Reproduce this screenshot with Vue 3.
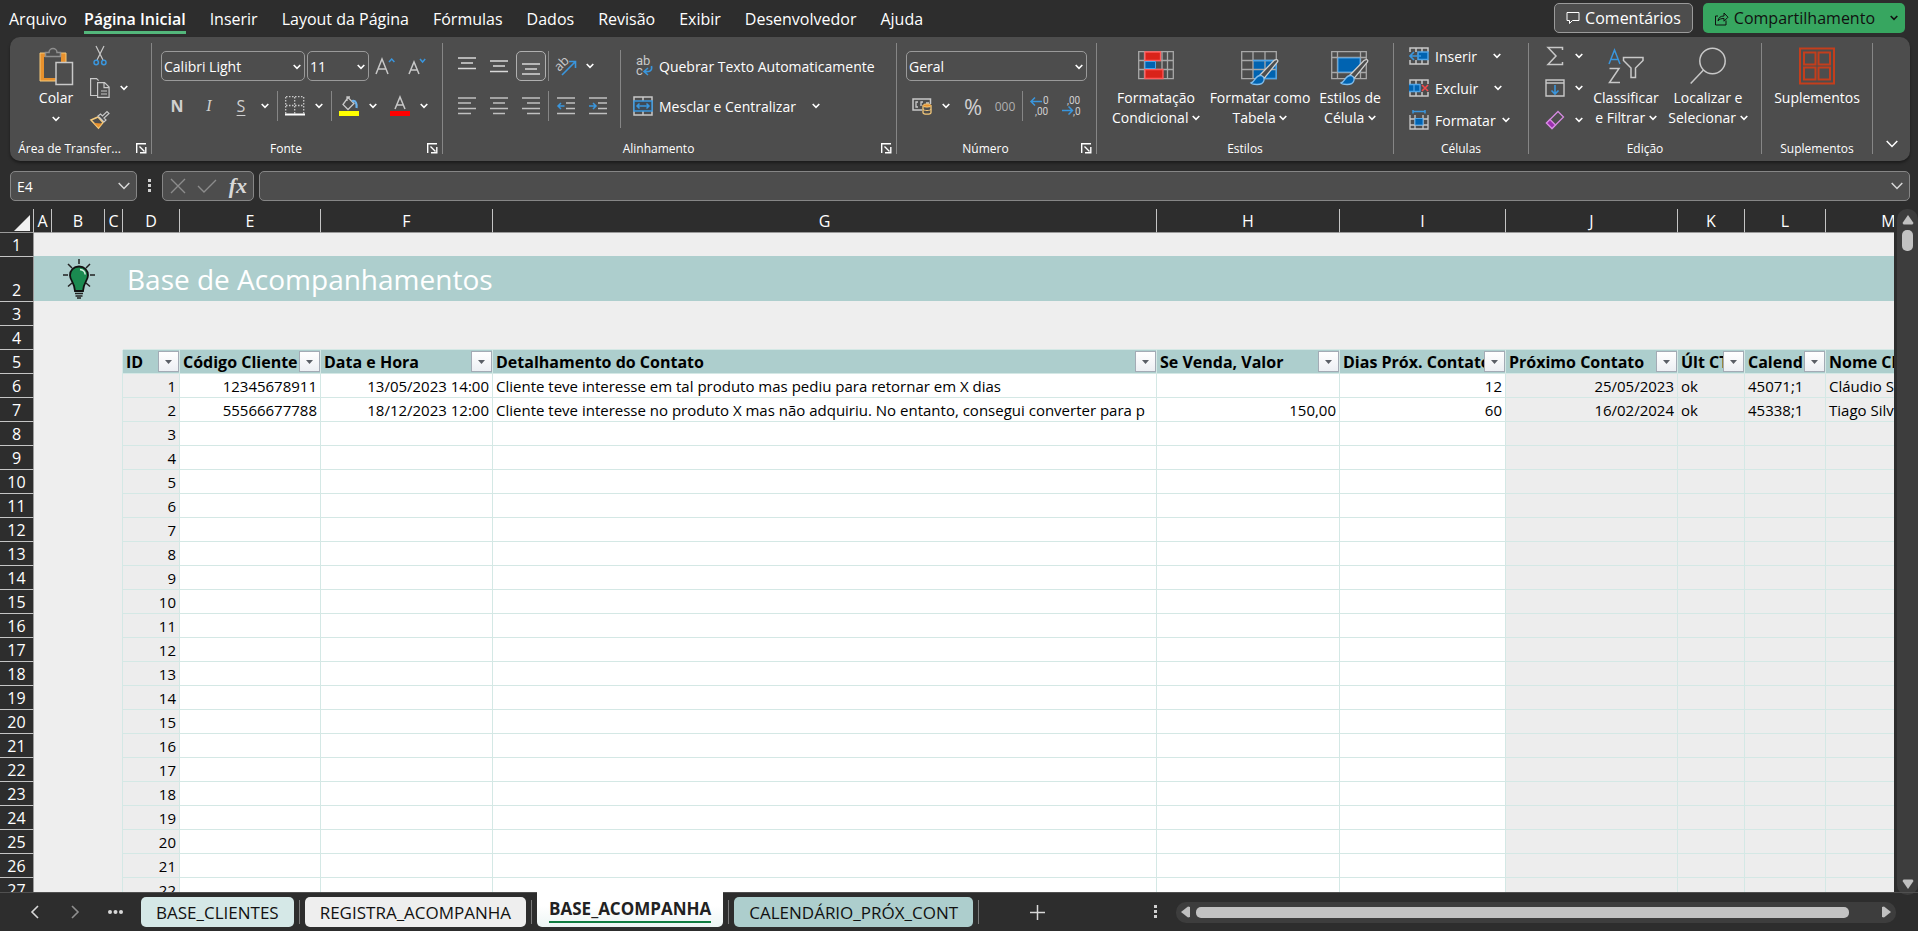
<template>
  <div class="app">
    <header class="topbar">
      <nav class="menu">
        <a href="#" class="menu-tab">Arquivo</a>
        <div class="menu-list">
          <a v-for="m in menus" :key="m" href="#" class="menu-tab" :class="{ active: m === 'Página Inicial' }">{{ m }}</a>
        </div>
      </nav>
      <div class="top-actions">
        <button class="btn-comments">
          <svg width="14" height="14" viewBox="0 0 14 14"><path d="M1 1.500h12v8H6.500L3.500 12.500V9.500H1z" fill="none" stroke="#fff" /></svg>
          Comentários
        </button>
        <button class="btn-share">
          <svg width="15" height="15" viewBox="0 0 15 15"><path d="M4 5H1.500v9H12V9.500M4 10c.5-3.500 2.500-5 6-5V2l4 4.200-4 4V7.500C7 7.500 5.500 8 4 10z" fill="none" stroke="#111" /></svg>
          Compartilhamento
          <Chevron />
        </button>
      </div>
    </header>

    <div class="ribbon">
      <section class="group g-clip">
        <div class="body">
          <button class="big paste">
            <svg width="36" height="38" viewBox="0 0 36 38">
              <path d="M2 6h26v28H2z" fill="#e8912d" stroke="#f5c97a" />
              <path d="M6 10h17v21H6z" fill="#4d4d4d" />
              <path d="M7.500 9.500V5.500h3.500a4 4 0 0 1 8 0h3.500v4z" fill="#4d4d4d" stroke="#8f8f8f" stroke-width="1.500" />
              <path d="M18 15.500h16.500v22H18z" fill="#4d4d4d" stroke="#c8c8c8" stroke-width="1.500" />
            </svg>
            <span>Colar</span>
            <Chevron />
          </button>
          <div class="stack">
            <div class="line">
              <button class="ico" aria-label="Recortar">
                <svg width="14" height="20" viewBox="0 0 14 20">
                  <path d="M3 0l7 14M11 0L4 14" stroke="#c8c8c8" stroke-width="1.200" fill="none" />
                  <circle cx="3.200" cy="16.500" r="2.200" fill="none" stroke="#3a96dd" stroke-width="1.500" />
                  <circle cx="10.800" cy="16.500" r="2.200" fill="none" stroke="#3a96dd" stroke-width="1.500" />
                </svg>
              </button>
            </div>
            <div class="line">
              <button class="ico" aria-label="Copiar">
                <svg width="20" height="20" viewBox="0 0 20 20" fill="none" stroke="#c8c8c8" stroke-width="1.200">
                  <path d="M7 17.500H.6V.6h6l2 2M7.600 4.600h7l4.500 4.500v10.300H7.600zM14 4.600v5h5M11 13h6M11 16h6" />
                </svg>
              </button>
              <button class="arrow" aria-label="Opções de cópia"><Chevron /></button>
            </div>
            <div class="line">
              <button class="ico" aria-label="Pincel de Formatação">
                <svg width="20" height="18" viewBox="0 0 20 18">
                  <path d="M1 9l7-3 5 5.500L8.500 17z" fill="#4d4d4d" stroke="#f5c97a" stroke-width="1.500" />
                  <path d="M4 12l8 .5L8.500 16.500z" fill="#e8912d" />
                  <path d="M8 5l6 6 2-2-2-2 5-4.500-2-2L12.500 5l-2-2z" fill="#4d4d4d" stroke="#c8c8c8" stroke-width="1.200" />
                </svg>
              </button>
            </div>
          </div>
        </div>
        <footer><span>Área de Transfer...</span><Launcher /></footer>
      </section>

      <section class="group g-font">
        <div class="body rows">
          <div class="row">
            <label class="combo font-name"><select aria-label="Fonte"><option>Calibri Light</option></select><Chevron /></label>
            <label class="combo font-size"><select aria-label="Tamanho"><option>11</option></select><Chevron /></label>
            <button class="ico" aria-label="Aumentar fonte">
              <svg width="20" height="18" viewBox="0 0 20 18" fill="none"><path d="M1 17L7 2l6 15M3 12h8" stroke="#c8c8c8" stroke-width="1.500" /><path d="M14 5l2.700-3 2.700 3" stroke="#3a96dd" stroke-width="1.500" /></svg>
            </button>
            <button class="ico" aria-label="Diminuir fonte">
              <svg width="18" height="18" viewBox="0 0 18 18" fill="none"><path d="M1 17L6 5l5 12M3 13h6" stroke="#c8c8c8" stroke-width="1.500" /><path d="M12 2l2.600 3 2.600-3" stroke="#3a96dd" stroke-width="1.500" /></svg>
            </button>
          </div>
          <div class="row">
            <button class="ico glyph bold">N</button>
            <button class="ico glyph italic">I</button>
            <button class="ico glyph under">S</button>
            <button class="arrow" aria-label="Sublinhado"><Chevron /></button>
            <i class="vsep wide"></i>
            <button class="ico" aria-label="Bordas">
              <svg width="20" height="20" viewBox="0 0 20 20" fill="none" stroke="#c8c8c8">
                <path d="M1 .7h18M1 9.500h18M.7 1v17M9.700 1v17M18.700 1v17" stroke-dasharray="1.500 1.500" stroke-width="1.300" />
                <path d="M0 18.500h20" stroke="#fff" stroke-width="2" />
              </svg>
            </button>
            <button class="arrow" aria-label="Opções de borda"><Chevron /></button>
            <i class="vsep wide"></i>
            <button class="ico" aria-label="Cor de preenchimento">
              <svg width="20" height="20" viewBox="0 0 20 20" fill="none">
                <path d="M9 1.500l6 6-6 6-5-5zM8 5V1h3" stroke="#c8c8c8" stroke-width="1.300" />
                <path d="M13 5c4-1 5 3 4.500 7" stroke="#6cb2ec" stroke-width="2.200" />
                <path d="M0 15h20v5H0z" fill="#ff0" />
              </svg>
            </button>
            <button class="arrow" aria-label="Cores de preenchimento"><Chevron /></button>
            <i class="gap"></i>
            <button class="ico" aria-label="Cor da fonte">
              <svg width="20" height="20" viewBox="0 0 20 20" fill="none"><path d="M5 13L10 1l5 12M6.500 9h7" stroke="#c8c8c8" stroke-width="1.500" /><path d="M0 15h20v5H0z" fill="#f00" /></svg>
            </button>
            <button class="arrow" aria-label="Cores da fonte"><Chevron /></button>
          </div>
        </div>
        <footer><span>Fonte</span><Launcher /></footer>
      </section>

      <section class="group g-align">
        <div class="body">
          <div class="rows">
            <div class="row">
              <button v-for="(d, i) in vAligns" :key="d" class="ico" :class="{ on: i === 2 }" aria-label="Alinhamento vertical">
                <svg width="18" height="18" viewBox="0 0 18 18"><path :d="d" stroke="#d8d8d8" stroke-width="1.500" /></svg>
              </button>
              <i class="vsep"></i>
              <button class="ico" aria-label="Orientação">
                <svg width="20" height="20" viewBox="0 0 20 20">
                  <text x="-1" y="12" font-size="13" fill="#c8c8c8" transform="rotate(-45 6 9)">ab</text>
                  <path d="M6 19L19 6M13 5.500h6.500V12" fill="none" stroke="#3a96dd" stroke-width="1.600" />
                </svg>
              </button>
              <button class="arrow" aria-label="Opções de orientação"><Chevron /></button>
            </div>
            <div class="row">
              <button v-for="d in hAligns" :key="d" class="ico" aria-label="Alinhamento horizontal">
                <svg width="18" height="18" viewBox="0 0 18 18"><path :d="d" stroke="#c0c0c0" stroke-width="1.500" /></svg>
              </button>
              <i class="vsep"></i>
              <button v-for="d in indents" :key="d" class="ico" aria-label="Recuo">
                <svg width="18" height="18" viewBox="0 0 18 18" fill="none">
                  <path d="M0 1h18M9 6h9M9 11.500h9M0 16.500h18" stroke="#c0c0c0" stroke-width="1.500" />
                  <path :d="d" stroke="#3a96dd" stroke-width="1.500" />
                </svg>
              </button>
            </div>
          </div>
          <i class="tall-sep"></i>
          <div class="rows">
            <button class="row text-btn">
              <svg class="small-text" width="20" height="20" viewBox="0 0 20 20">
                <text x="3" y="9" font-size="13" fill="#c8c8c8">ab</text>
                <text x="3" y="19" font-size="13" fill="#c8c8c8">c</text>
                <path d="M18.500 10c1 5-2 6-7 5.500M15 12l-4 3.500 4 3.500" fill="none" stroke="#3a96dd" stroke-width="1.600" />
              </svg>
              <span>Quebrar Texto Automaticamente</span>
            </button>
            <button class="row text-btn">
              <svg width="20" height="20" viewBox="0 0 20 20" fill="none">
                <path d="M1 1h18v18H1zM10 1v4M10 15v4" stroke="#c8c8c8" stroke-width="1.500" />
                <path d="M1 5h18v10H1z" fill="#3f4a55" stroke="#3a96dd" stroke-width="1.500" />
                <path d="M4 10h12M6.500 7.500L4 10l2.500 2.500M13.500 7.500L16 10l-2.500 2.500" stroke="#3a96dd" stroke-width="1.500" />
              </svg>
              <span>Mesclar e Centralizar</span>
              <Chevron class="far" />
            </button>
          </div>
        </div>
        <footer><span>Alinhamento</span><Launcher /></footer>
      </section>

      <section class="group g-number">
        <div class="body rows">
          <div class="row">
            <label class="combo num-format"><select aria-label="Formato de número"><option>Geral</option></select><Chevron /></label>
          </div>
          <div class="row">
            <button class="ico" aria-label="Formato contábil">
              <svg width="20" height="18" viewBox="0 0 20 18" fill="none">
                <path d="M18.500 7V2H1v11h9" stroke="#c8c8c8" stroke-width="1.500" />
                <path d="M6 5H4v5h2M11 5H9v4M14 6h3" stroke="#c8c8c8" stroke-width="1.300" />
                <path d="M11 8.500v7c0 2.200 8 2.200 8 0v-7" fill="#4d4d4d" stroke="#f5c97a" stroke-width="1.300" />
                <ellipse cx="15" cy="8.500" rx="4" ry="1.600" fill="#e8912d" stroke="#f5c97a" />
                <path d="M11 12c0 2 8 2 8 0" stroke="#f5c97a" />
              </svg>
            </button>
            <button class="arrow" aria-label="Moedas"><Chevron /></button>
            <i class="gap"></i>
            <button class="ico glyph percent">%</button>
            <button class="ico glyph thousands">000</button>
            <i class="vsep"></i>
            <button class="ico" aria-label="Aumentar casas decimais">
              <svg class="small-text" width="20" height="20" viewBox="0 0 20 20">
                <text x="13" y="8" font-size="10" fill="#d0d0d0">0</text>
                <text x="5" y="19" font-size="10" fill="#d0d0d0">,00</text>
                <path d="M12 5.500H1M5 1.500l-4 4 4 4" fill="none" stroke="#3a96dd" stroke-width="1.500" />
              </svg>
            </button>
            <button class="ico" aria-label="Diminuir casas decimais">
              <svg class="small-text" width="20" height="20" viewBox="0 0 20 20">
                <text x="5" y="8" font-size="10" fill="#d0d0d0">,00</text>
                <text x="11" y="19" font-size="10" fill="#d0d0d0">,0</text>
                <path d="M0 14.500h10M6.500 10.500l4 4-4 4" fill="none" stroke="#3a96dd" stroke-width="1.500" />
              </svg>
            </button>
          </div>
        </div>
        <footer><span>Número</span><Launcher /></footer>
      </section>

      <section class="group g-styles">
        <div class="body">
          <button class="big w100">
            <svg width="36" height="38" viewBox="0 0 36 38" fill="none">
              <path d="M.7 4.700h34.600v27H.7zM.7 13.500h34.600M.7 22.500h34.600M6.500 4.700v27M24 4.700v27M29.500 4.700v27" stroke="#a8a8a8" stroke-width="1.300" />
              <path d="M7 5h15.500v8.500H7zM7 22.500h18v9H7z" fill="#d9231a" stroke="#ff5a5a" stroke-width="1.300" />
              <path d="M7 14.500h10.500v7H7z" fill="#0063b1" stroke="#4ea3e6" />
            </svg>
            <span>Formatação<br />Condicional <Chevron /></span>
          </button>
          <button class="big w108">
            <svg width="38" height="38" viewBox="0 0 38 38" fill="none">
              <path d="M12 13h23v18H12z" fill="#0063b1" />
              <path d="M.7 4.700h34.600v27H.7zM.7 13.500h34.600M.7 22.500h34.600M12 4.700v27M24 4.700v27" stroke="#a8a8a8" stroke-width="1.300" />
              <path d="M12 13.500h23.300M35.300 13v18.500H24" stroke="#4ea3e6" stroke-width="1.300" />
              <path d="M19 28L33 13.500c3-2 4.500-.5 3.500 1.500L23.500 31z" fill="#4d4d4d" stroke="#d0d0d0" stroke-width="1.300" />
              <path d="M10 36c4-1 4-8 10-7.500 5 2 4 9-4 9-3 0-5-.5-6-1.500z" fill="#0063b1" stroke="#83beec" stroke-width="1.300" />
            </svg>
            <span>Formatar como<br />Tabela <Chevron /></span>
          </button>
          <button class="big w72">
            <svg width="38" height="38" viewBox="0 0 38 38" fill="none">
              <path d="M.7 4.700h34.600v27H.7zM.7 10.500h34.600M.7 25.500h34.600M6.500 4.700v27M29.500 4.700v27" stroke="#a8a8a8" stroke-width="1.300" />
              <path d="M7 11h22v14H7z" fill="#0063b1" stroke="#4ea3e6" />
              <path d="M19 28L33 13.500c3-2 4.500-.5 3.500 1.500L23.500 31z" fill="#4d4d4d" stroke="#d0d0d0" stroke-width="1.300" />
              <path d="M10 36c4-1 4-8 10-7.500 5 2 4 9-4 9-3 0-5-.5-6-1.500z" fill="#0063b1" stroke="#83beec" stroke-width="1.300" />
            </svg>
            <span>Estilos de<br />Célula <Chevron /></span>
          </button>
        </div>
        <footer><span>Estilos</span></footer>
      </section>

      <section class="group g-cells">
        <div class="body">
          <div class="stack">
            <button class="line text-btn">
              <svg width="20" height="18" viewBox="0 0 20 18" fill="none">
                <path d="M1 5V1h18v4M7 1v4M13 1v4M1 13v4h18v-4M7 13v4M13 13v4" stroke="#c8c8c8" stroke-width="1.500" />
                <path d="M9 5h10v7.500H9z" fill="#0063b1" stroke="#4ea3e6" stroke-width="1.500" />
                <path d="M12 9H1M5 5L1 9l4 4" stroke="#3a96dd" stroke-width="1.700" />
              </svg>
              <span>Inserir</span><Chevron class="far" />
            </button>
            <button class="line text-btn">
              <svg width="20" height="18" viewBox="0 0 20 18" fill="none">
                <path d="M1 5V1h18v4M7 1v4M13 1v4M1 13v4h18v-4M7 13v4M13 13v4" stroke="#c8c8c8" stroke-width="1.500" />
                <path d="M0 5.500h5v7H0M5 5.500h6v7H5z" fill="#0063b1" stroke="#4ea3e6" stroke-width="1.300" />
                <path d="M13 6l6 6M19 6l-6 6" stroke="#f0494b" stroke-width="1.600" />
              </svg>
              <span>Excluir</span><Chevron class="far" />
            </button>
            <button class="line text-btn">
              <svg width="20" height="20" viewBox="0 0 20 20" fill="none">
                <path d="M1 5v14h18V5M1 9h18M1 15h18M6 5v14M14 5v14" stroke="#c8c8c8" stroke-width="1.300" />
                <path d="M6 8.500h8v6.500H6z" fill="#0063b1" stroke="#4ea3e6" />
                <path d="M4 1.500h12M4 0v3.500M16 0v3.500" stroke="#3a96dd" stroke-width="1.500" />
              </svg>
              <span>Formatar</span><Chevron />
            </button>
          </div>
        </div>
        <footer><span>Células</span></footer>
      </section>

      <section class="group g-edit">
        <div class="body">
          <div class="stack">
            <div class="line">
              <button class="ico" aria-label="Soma">
                <svg width="18" height="20" viewBox="0 0 18 20" fill="none"><path d="M16.500 4V1.500H2L10 10l-8 8.500h14.500V16" stroke="#c8c8c8" stroke-width="1.500" /></svg>
              </button>
              <button class="arrow" aria-label="Funções"><Chevron /></button>
            </div>
            <div class="line">
              <button class="ico" aria-label="Preencher">
                <svg width="20" height="18" viewBox="0 0 20 18" fill="none"><path d="M1 1h18v16H1zM1 4h18" stroke="#c8c8c8" stroke-width="1.400" /><path d="M10 6v9M6.500 11.500L10 15l3.500-3.500" stroke="#3a96dd" stroke-width="1.600" /></svg>
              </button>
              <button class="arrow" aria-label="Direções"><Chevron /></button>
            </div>
            <div class="line">
              <button class="ico" aria-label="Limpar">
                <svg width="20" height="20" viewBox="0 0 20 20" fill="none" stroke="#d58ae0" stroke-width="1.300"><path d="M13 1.500l5.500 5.500L7 18.500 1.500 13z" /><path d="M5 9.500l5.500 5.500L7 18.500 1.500 13z" fill="#9b2fae" /></svg>
              </button>
              <button class="arrow" aria-label="Opções de limpeza"><Chevron /></button>
            </div>
          </div>
          <button class="big w80">
            <svg width="36" height="38" viewBox="0 0 36 38" fill="none" stroke-width="1.500">
              <path d="M1 17L6.500 3 12 17M3 12.500h7" stroke="#3a96dd" />
              <path d="M1.500 21.500h9.500L1.500 35.500H12" stroke="#c8c8c8" />
              <path d="M15.500 10.500h19.500v3l-7.500 7.500v9.500H23V21l-7.500-7.500z" stroke="#c8c8c8" />
            </svg>
            <span>Classificar<br />e Filtrar <Chevron /></span>
          </button>
          <button class="big w84">
            <svg width="36" height="38" viewBox="0 0 36 38" fill="none" stroke="#c8c8c8" stroke-width="1.500"><circle cx="22.500" cy="14" r="12.700" /><path d="M13.500 23L.7 36.500" /></svg>
            <span>Localizar e<br />Selecionar <Chevron /></span>
          </button>
        </div>
        <footer><span>Edição</span></footer>
      </section>

      <section class="group g-addins">
        <div class="body">
          <button class="big fill">
            <svg width="36" height="38" viewBox="0 0 36 38" fill="none" stroke="#c43e1c" stroke-width="2"><path d="M1 1.500h34v35H1zM5 5.500h11.500v12H5zM19.500 5.500H31v12H19.500zM5 20.500h11.500v12H5zM19.500 20.500H31v12H19.500z" /></svg>
            <span>Suplementos</span>
          </button>
        </div>
        <footer><span>Suplementos</span></footer>
      </section>

      <button class="collapse" aria-label="Recolher faixa"><BigChevron /></button>
    </div>

    <div class="formula-row">
      <div class="field name-box">
        <input v-model="cellRef" aria-label="Caixa de nome" />
        <button aria-label="Nomes"><BigChevron /></button>
      </div>
      <svg class="grip" width="3" height="14" viewBox="0 0 3 14"><path d="M0 0h3v3H0zM0 5h3v3H0zM0 10h3v3H0z" fill="#d0d0d0" /></svg>
      <div class="field fx-box">
        <button aria-label="Cancelar"><svg width="16" height="16" viewBox="0 0 16 16"><path d="M1 1l14 14M15 1L1 15" stroke="#8c8c8c" stroke-width="1.400" /></svg></button>
        <button aria-label="Inserir valor"><svg width="20" height="14" viewBox="0 0 20 14"><path d="M1 7l6 6L19 1" fill="none" stroke="#8c8c8c" stroke-width="1.400" /></svg></button>
        <button class="fx">fx</button>
      </div>
      <div class="field formula">
        <input aria-label="Barra de fórmulas" />
        <button aria-label="Expandir barra"><BigChevron /></button>
      </div>
    </div>

    <main class="sheet">
      <div class="grid">
        <table>
          <colgroup>
            <col class="col-head" />
            <col v-for="c in columns" :key="c.id" :style="{ width: c.w + 'px' }" />
          </colgroup>
          <thead>
            <tr>
              <th class="corner"><svg width="16" height="16" viewBox="0 0 16 16"><path d="M16 0v16H0z" fill="#f0f0f0" /></svg></th>
              <th v-for="c in columns" :key="c.id" class="col-letter">{{ c.id }}</th>
            </tr>
          </thead>
          <tbody>
            <tr><th class="row-num">1</th><td colspan="13" class="blank above-band"></td></tr>
            <tr class="band">
              <th class="row-num">2</th>
              <td></td>
              <td class="bulb">
                <svg width="32" height="40" viewBox="0 0 32 40">
                  <path d="M16 0v5M5 5l4 4M27 5l-4 4M0 16h5M27 16h5M5 27.500l4-3.500M27 27.500L23 24" stroke="#222" stroke-width="1.500" />
                  <path d="M16 7.500c-5.500 0-9 4-9 8.700 0 5.300 4.500 7 5 15.800h8c.5-8.800 5-10.500 5-15.800 0-4.700-3.500-8.700-9-8.700z" fill="#1a8a50" stroke="#111" stroke-width="1.800" />
                  <path d="M17 10.500c3 .3 5 2.500 5.200 5" fill="none" stroke="#d5efe0" stroke-width="1.500" />
                  <path d="M12 34.500h8M12.500 37h7M14 39h4" stroke="#222" stroke-width="1.600" />
                </svg>
              </td>
              <td></td>
              <td colspan="10" class="title">Base de Acompanhamentos</td>
            </tr>
            <tr><th class="row-num">3</th><td colspan="13" class="blank"></td></tr>
            <tr><th class="row-num">4</th><td colspan="3" class="blank"></td><td colspan="10" class="blank above"></td></tr>
            <tr>
              <th class="row-num">5</th>
              <td colspan="3" class="blank edge"></td>
              <th v-for="c in dataCols" :key="c.id" class="field-head">
                <div>
                  <span>{{ c.title }}</span>
                  <button aria-label="Filtrar"><svg width="7" height="4" viewBox="0 0 7 4"><path d="M0 0h7L3.500 4z" fill="#5a5f66" /></svg></button>
                </div>
              </th>
            </tr>
            <tr v-for="n in 22" :key="n">
              <th class="row-num">{{ n + 5 }}</th>
              <td colspan="3" class="blank edge"></td>
              <td v-for="(c, i) in dataCols" :key="c.id" class="cell" :class="{ num: c.num, gray: c.gray }">{{ i === 0 ? n : (records[n - 1] || [])[i - 1] }}</td>
            </tr>
          </tbody>
        </table>
      </div>
      <div class="vscroll">
        <svg width="12" height="10" viewBox="0 0 12 10"><path d="M6 0l5.500 8-1 1.500h-9L.5 8z" fill="#c0c0c0" /></svg>
        <i class="thumb"></i>
        <svg class="down" width="12" height="10" viewBox="0 0 12 10"><path d="M6 10l5.500-8-1-1.500h-9L.5 2z" fill="#c0c0c0" /></svg>
      </div>
    </main>

    <footer class="tabbar">
      <div class="nav-btns">
        <button aria-label="Anterior"><svg width="8" height="14" viewBox="0 0 8 14"><path d="M7 1L1 7l6 6" fill="none" stroke="#d8d8d8" stroke-width="1.600" /></svg></button>
        <button aria-label="Próxima"><svg width="8" height="14" viewBox="0 0 8 14"><path d="M1 1l6 6-6 6" fill="none" stroke="#8f8f8f" stroke-width="1.600" /></svg></button>
        <button aria-label="Mais planilhas"><svg width="15" height="4" viewBox="0 0 15 4" fill="#d8d8d8"><circle cx="2" cy="2" r="2" /><circle cx="7.500" cy="2" r="2" /><circle cx="13" cy="2" r="2" /></svg></button>
      </div>
      <div class="tabs">
        <template v-for="t in tabs" :key="t.name">
          <button class="tab" :class="[t.color, { current: t.name === current }]" @click="current = t.name"><span>{{ t.name }}</span></button>
          <i class="tab-sep"></i>
        </template>
      </div>
      <button class="add" aria-label="Nova planilha"><svg width="15" height="15" viewBox="0 0 15 15"><path d="M7.500 0v15M0 7.500h15" stroke="#d8d8d8" stroke-width="1.500" /></svg></button>
      <svg class="grip push" width="3" height="14" viewBox="0 0 3 14"><path d="M0 0h3v3H0zM0 5h3v3H0zM0 10h3v3H0z" fill="#d0d0d0" /></svg>
      <div class="hscroll">
        <svg width="9" height="12" viewBox="0 0 9 12"><path d="M0 6l7-5.500L9 1v10l-2 .5z" fill="#c0c0c0" /></svg>
        <i class="thumb"></i>
        <svg width="9" height="12" viewBox="0 0 9 12"><path d="M9 6L2 .5 0 1v10l2 .5z" fill="#c0c0c0" /></svg>
      </div>
    </footer>
  </div>
</template>

<script setup>
import { ref, h } from 'vue'

const menus = ['Página Inicial', 'Inserir', 'Layout da Página', 'Fórmulas', 'Dados', 'Revisão', 'Exibir', 'Desenvolvedor', 'Ajuda']

const cellRef = ref('E4')
const current = ref('BASE_ACOMPANHA')

const line = (d, w) => h('path', { d, fill: 'none', stroke: 'currentColor', 'stroke-width': w })
const Chevron = () => h('svg', { class: 'chev', width: 8, height: 6, viewBox: '0 0 8 6' }, [line('M.7 1L4 4.300 7.300 1', 1.6)])
const BigChevron = () => h('svg', { width: 12, height: 8, viewBox: '0 0 12 8' }, [line('M.7 1L6 6.500 11.300 1', 1.5)])
const Launcher = () => h('button', { class: 'launcher', 'aria-label': 'Mais opções' }, [
  h('svg', { width: 11, height: 11, viewBox: '0 0 11 11' }, [
    h('path', { d: 'M.7 10V.7H10M3.500 3.500l5 5M9.800 4v5.800H4', fill: 'none', stroke: '#fff', 'stroke-width': 1.4 }),
  ]),
])

const vAligns = ['M0 1h18M3 6h12M0 11.500h18', 'M0 4h18M3 9h12M0 14.500h18', 'M0 7h18M3 12h12M0 17h18']
const hAligns = [
  'M0 1h18M0 6h13M0 11.500h18M0 16.500h13',
  'M0 1h18M3 6h12M0 11.500h18M3 16.500h12',
  'M0 1h18M5 6h13M0 11.500h18M5 16.500h13',
]
const indents = ['M7.500 9H1M4 6L1 9l3 3', 'M0 9h6.500M4 6l3 3-3 3']

const columns = [
  { id: 'A', w: 18 },
  { id: 'B', w: 53 },
  { id: 'C', w: 18 },
  { id: 'D', w: 57, title: 'ID', num: true, gray: true },
  { id: 'E', w: 141, title: 'Código Cliente', num: true },
  { id: 'F', w: 172, title: 'Data e Hora', num: true },
  { id: 'G', w: 664, title: 'Detalhamento do Contato' },
  { id: 'H', w: 183, title: 'Se Venda, Valor', num: true },
  { id: 'I', w: 166, title: 'Dias Próx. Contato', num: true },
  { id: 'J', w: 172, title: 'Próximo Contato', num: true, gray: true },
  { id: 'K', w: 67, title: 'Últ CTT', gray: true },
  { id: 'L', w: 81, title: 'Calend', gray: true },
  { id: 'M', w: 126, title: 'Nome Cliente', gray: true },
]
const dataCols = columns.slice(3)

const records = [
  ['12345678911', '13/05/2023 14:00', 'Cliente teve interesse em tal produto mas pediu para retornar em X dias', '', '12', '25/05/2023', 'ok', '45071;1', 'Cláudio Silva'],
  ['55566677788', '18/12/2023 12:00', 'Cliente teve interesse no produto X mas não adquiriu. No entanto, consegui converter para p', '150,00', '60', '16/02/2024', 'ok', '45338;1', 'Tiago Silva'],
]

const tabs = [
  { name: 'BASE_CLIENTES', color: 'pale' },
  { name: 'REGISTRA_ACOMPANHA', color: 'light' },
  { name: 'BASE_ACOMPANHA', color: 'pale' },
  { name: 'CALENDÁRIO_PRÓX_CONT', color: 'teal' },
]
</script>

<style>
body {
  margin: 0;
  background: #2d2d2d;
}
</style>

<style scoped>
.app {
  display: flex;
  flex-direction: column;
  height: 100vh;
  overflow: hidden;
  background: #2d2d2d;
  color: #fff;
  font-family: "Open Sans", "Noto Sans", sans-serif;
  font-size: 14px;
}
button, input, select {
  font: inherit;
  color: inherit;
  background: none;
  border: none;
  padding: 0;
  margin: 0;
  outline: none;
}
button {
  display: flex;
  align-items: center;
  justify-content: center;
  white-space: nowrap;
}
svg {
  flex: none;
  overflow: visible;
}
.small-text { font-family: Roboto, sans-serif; }
:deep(.chev) { display: inline-block; }

/* top bar */
.topbar {
  display: flex;
  justify-content: space-between;
  height: 37px;
  flex: none;
  padding: 0 13px 0 9px;
}
.menu, .menu-list {
  display: flex;
  height: 34px;
  font-size: 16px;
}
.menu { gap: 17px; }
.menu-list { gap: 24px; }
.menu-tab {
  display: flex;
  align-items: center;
  box-sizing: border-box;
  height: 34px;
  color: #fff;
  text-decoration: none;
  white-space: nowrap;
  padding-top: 6px;
  border-bottom: 3px solid transparent;
}
.menu-tab.active {
  font-weight: 600;
  border-bottom-color: #53b77b;
}
.top-actions {
  display: flex;
  gap: 10px;
  padding-top: 3px;
  font-size: 16px;
}
.top-actions button {
  height: 30px;
  box-sizing: border-box;
  border-radius: 5px;
  gap: 5px;
}
.btn-comments {
  background: #4d4d4d;
  border: 1px solid #9a9a9a;
  padding: 0 11px;
}
.btn-share {
  background: #37a660;
  color: #111;
  padding: 0 7px 0 11px;
}
.btn-share :deep(.chev) { margin-left: 10px; }

/* ribbon */
.ribbon {
  display: flex;
  flex: none;
  margin: 0 8px 0 10px;
  padding: 6px 0 7px;
  background: #4d4d4d;
  border-radius: 10px;
  box-shadow: 0 2px 3px rgba(0, 0, 0, 0.4);
}
.group {
  display: flex;
  flex-direction: column;
  flex: none;
  box-sizing: border-box;
  height: 111px;
  border-right: 1px solid #868686;
}
.g-clip { width: 142px; }
.g-font { width: 291px; }
.g-align { width: 454px; }
.g-number { width: 200px; }
.g-styles { width: 297px; }
.g-cells { width: 135px; }
.g-edit { width: 233px; }
.g-addins { width: 111px; }
.body {
  display: flex;
  flex: 1;
}
.group footer {
  display: flex;
  align-items: flex-end;
  height: 14px;
  font-size: 12px;
  line-height: 10px;
}
.group footer span {
  flex: 1;
  text-align: center;
  white-space: nowrap;
}
.group footer :deep(.launcher) {
  width: 11px;
  height: 11px;
  margin: 0 4px 0 7px;
  padding: 0;
  border: none;
  background: none;
  display: flex;
}
.rows {
  display: flex;
  flex-direction: column;
  gap: 10px;
  padding-top: 8px;
}
.g-font .rows, .g-number .rows { padding-left: 9px; }
.row {
  display: flex;
  align-items: center;
  height: 30px;
}
.stack {
  display: flex;
  flex-direction: column;
  margin-top: -3px;
}
.line {
  display: flex;
  align-items: center;
  height: 32px;
}
.ico {
  width: 32px;
  height: 30px;
}
.ico.on {
  width: 30px;
  margin: 0 1px;
  box-sizing: border-box;
  border: 1px solid #b0b0b0;
  border-radius: 5px;
  background: #575757;
}
.arrow {
  width: 15px;
  height: 30px;
}
.vsep {
  width: 1px;
  height: 30px;
  margin: 0 1px;
  background: #868686;
}
.vsep.wide { margin-left: 5px; }
.gap { width: 4px; }
.tall-sep {
  width: 1px;
  height: 78px;
  margin: 7px 12px 0 6px;
  background: #868686;
}
.glyph {
  font-size: 16px;
  color: #d0d0d0;
}
.bold { font-weight: 700; }
.italic {
  font-family: "Liberation Serif", serif;
  font-style: italic;
}
.under {
  text-decoration: underline;
  text-underline-offset: 3px;
}
.percent { font-size: 22px; }
.thousands {
  font-size: 12px;
  color: #b0b0b0;
}
.combo {
  position: relative;
  box-sizing: border-box;
  height: 30px;
  border: 1px solid #9a9a9a;
  border-radius: 5px;
}
.combo select {
  appearance: none;
  width: 100%;
  height: 28px;
  padding-left: 2px;
}
.combo :deep(.chev) {
  position: absolute;
  right: 3px;
  top: 12px;
  pointer-events: none;
}
.font-name {
  width: 144px;
  margin-right: 2px;
}
.font-size { width: 62px; }
.num-format { width: 181px; }
.g-align .rows:first-child {
  width: 163px;
  padding-left: 8px;
}
.text-btn {
  gap: 6px;
  justify-content: flex-start;
}
.far { margin-left: 10px; }
.big {
  flex-direction: column;
  justify-content: flex-start;
  padding-top: 4px;
  line-height: 20px;
}
.big > span {
  margin-top: 3px;
  text-align: center;
}
.big :deep(.chev) { vertical-align: 2px; }
.paste {
  width: 52px;
  margin-left: 20px;
  margin-right: 2px;
}
.paste :deep(.chev) { margin-top: 8px; }
.g-styles .body { padding-left: 9px; }
.w100 { width: 100px; }
.w108 { width: 108px; }
.w72 { width: 72px; }
.w80 { width: 80px; }
.w84 { width: 84px; }
.fill { flex: 1; }
.g-cells .body { padding-left: 15px; }
.g-edit .body { padding-left: 10px; }
.collapse {
  flex: 1;
  align-items: flex-end;
  padding-bottom: 6px;
}

/* formula bar */
.formula-row {
  display: flex;
  align-items: center;
  flex: none;
  height: 30px;
  margin: 10px 8px 8px 10px;
}
.field {
  display: flex;
  align-items: center;
  box-sizing: border-box;
  height: 30px;
  background: #4d4d4d;
  border: 1px solid #868686;
  border-radius: 5px;
}
.field input {
  flex: 1;
  min-width: 0;
  padding-left: 6px;
}
.field button {
  padding: 0 6px 0 0;
  color: #d8d8d8;
}
.name-box { width: 127px; }
.grip { margin: 0 11px; }
.fx-box {
  width: 92px;
  margin-right: 5px;
  padding: 0 6px 0 7px;
  justify-content: space-between;
}
.fx-box button { padding: 0; }
.field .fx {
  font-family: "Liberation Serif", serif;
  font-style: italic;
  font-weight: 700;
  font-size: 22px;
}
.formula { flex: 1; }

/* sheet */
.sheet {
  display: flex;
  flex: 1;
  min-height: 0;
}
.grid {
  flex: 1;
  min-width: 0;
  overflow: hidden;
  background: #eee;
}
table {
  width: 100%;
  table-layout: fixed;
  border-collapse: separate;
  border-spacing: 0;
  color: #000;
  font-size: 15px;
}
.col-head { width: 34px; }
th, td {
  padding: 0;
  box-sizing: border-box;
  height: 24px;
  line-height: 22px;
  white-space: nowrap;
  overflow: hidden;
}
.corner, .col-letter, .row-num {
  background: #2d2d2d;
  color: #fff;
  font-size: 16px;
  font-weight: 400;
  padding-top: 1px;
  border-right: 1px solid #c4c4c4;
  border-bottom: 1px solid #9a9a9a;
}
.corner svg {
  display: block;
  margin: 3px 0 0 14px;
}
.row-num {
  vertical-align: bottom;
  border-right-color: #9a9a9a;
  border-bottom-color: #c4c4c4;
}
.blank { background: #eee; }
.above-band { border-bottom: 1px solid #adcecd; }
.above { border-bottom: 1px solid #d4e8e5; }
.edge { border-right: 1px solid #d4e8e5; }
.band td {
  height: 45px;
  background: #adcecd;
  border-bottom: 1px solid #eee;
}
.bulb svg {
  display: block;
  margin: 0 auto;
}
.band .title {
  padding-left: 4px;
  color: #fff;
  font-size: 28px;
}
.field-head {
  background: #adcecd;
  border-right: 1px solid #d4e8e5;
  border-bottom: 1px solid #d4e8e5;
  font-weight: 700;
  font-size: 16px;
  text-align: left;
}
.field-head div {
  display: flex;
  align-items: center;
}
.field-head span {
  flex: 1;
  overflow: hidden;
  padding: 1px 0 0 3px;
}
.field-head button {
  width: 21px;
  height: 21px;
  flex: none;
  box-sizing: border-box;
  border: 1px solid #a3abb5;
  background: linear-gradient(#fff, #eceff3);
}
.cell {
  background: #fff;
  border-right: 1px solid #d4e8e5;
  border-bottom: 1px solid #d4e8e5;
  padding: 1px 3px 0;
}
.num { text-align: right; }
.gray { background: #ededed; }
.vscroll {
  display: flex;
  flex-direction: column;
  align-items: center;
  box-sizing: border-box;
  width: 21px;
  margin: 0 0 -3px 3px;
  padding: 6px 0;
  background: #3d3d3d;
  border-radius: 10px;
}
.vscroll .thumb {
  width: 11px;
  height: 21px;
  margin-top: 5px;
  border-radius: 5px;
  background: #c2c2c2;
}
.down { margin-top: auto; }

/* sheet tabs */
.tabbar {
  display: flex;
  align-items: center;
  flex: none;
  box-sizing: border-box;
  height: 39px;
  padding-right: 22px;
  border-top: 1px solid #505050;
}
.nav-btns {
  display: flex;
  width: 141px;
  box-sizing: border-box;
  padding-left: 15px;
}
.nav-btns button { width: 40px; }
.tabs {
  display: flex;
  align-items: center;
  align-self: flex-start;
}
.tab {
  height: 30px;
  margin-top: 4px;
  padding: 0 15px;
  border-radius: 5px;
  color: #111;
  font-size: 17px;
}
.pale { background: #d5e8e7; }
.light { background: #eee; }
.teal { background: #adcecd; }
.tab.current {
  height: 35px;
  margin-top: -1px;
  padding: 0 12px;
  border-radius: 0 0 5px 5px;
  background: linear-gradient(#fff 40%, #edf5f4);
  color: #222;
  font-weight: 700;
}
.current span {
  line-height: 25px;
  border-bottom: 2px solid #107c41;
}
.tab-sep {
  width: 1px;
  height: 24px;
  margin: 4px 5px 0;
  background: #7a7a7a;
}
.add { margin-left: 46px; }
.push { margin-left: auto; margin-right: 19px; }
.hscroll {
  display: flex;
  align-items: center;
  box-sizing: border-box;
  width: 38%;
  height: 21px;
  padding: 0 5px;
  border-radius: 10px;
  background: #3d3d3d;
}
.hscroll .thumb {
  width: 92%;
  height: 11px;
  margin: 0 auto 0 6px;
  border-radius: 5px;
  background: #c2c2c2;
}
</style>
